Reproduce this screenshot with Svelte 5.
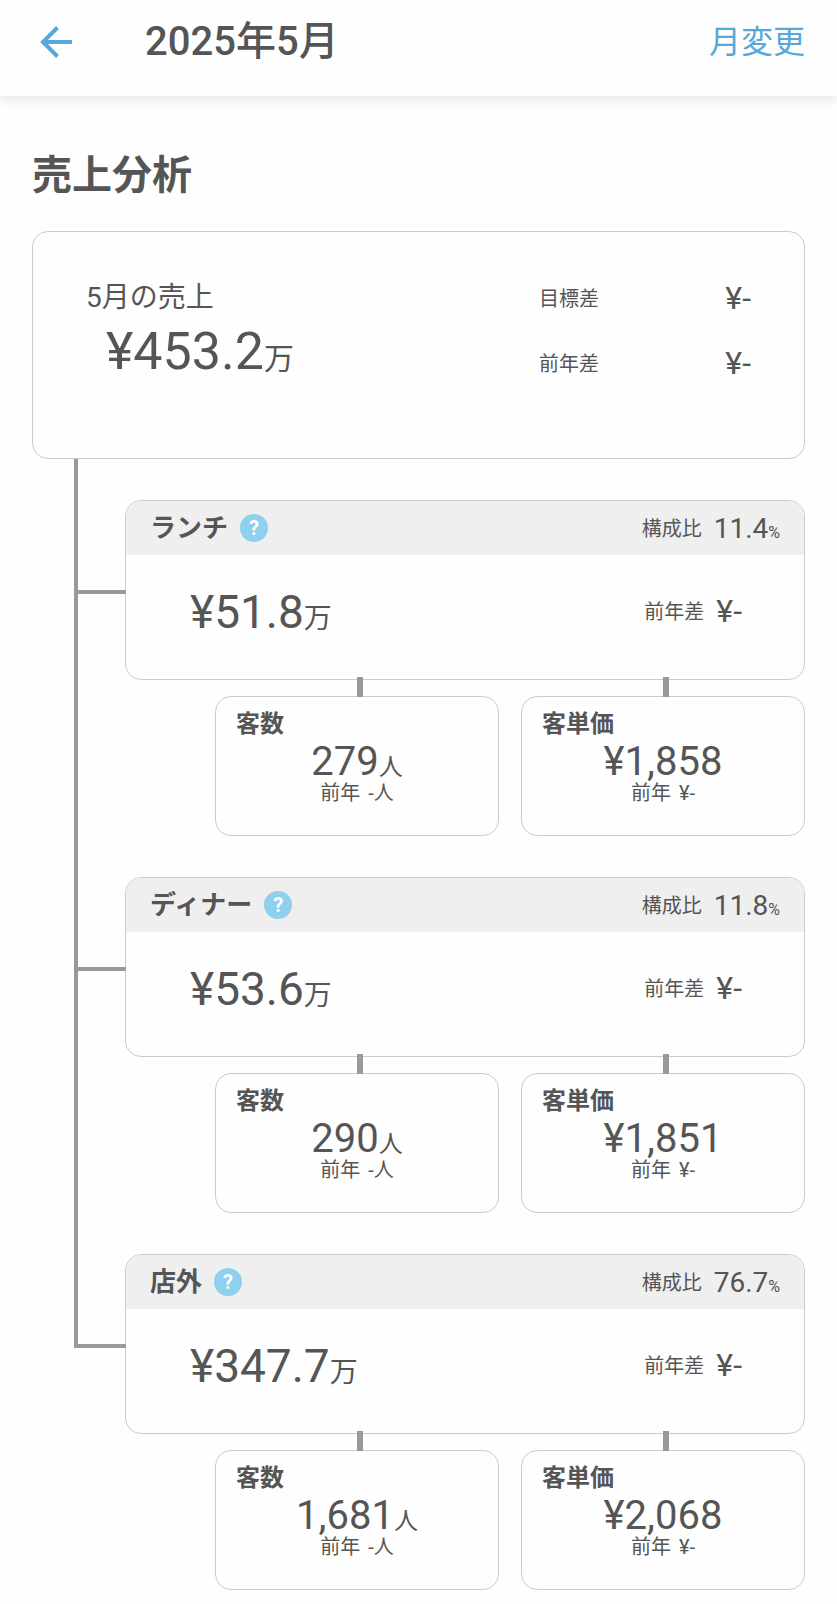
<script>
	const summary = {
		label: '5月の売上',
		amount: '¥453.2',
		diffs: [
			{ label: '目標差', value: '¥-' },
			{ label: '前年差', value: '¥-' }
		]
	};

	const segments = [
		{ name: 'ランチ', ratio: '11.4', amount: '¥51.8', diff: '¥-', guests: '279', spend: '¥1,858' },
		{ name: 'ディナー', ratio: '11.8', amount: '¥53.6', diff: '¥-', guests: '290', spend: '¥1,851' },
		{ name: '店外', ratio: '76.7', amount: '¥347.7', diff: '¥-', guests: '1,681', spend: '¥2,068' }
	];
</script>

<header class="app-bar">
	<button class="back" aria-label="戻る">
		<svg viewBox="0 0 34 34" width="34" height="34" aria-hidden="true">
			<path d="M32 17H4M17.500 2.500L3 17L17.500 31.500" fill="none" stroke="currentColor" stroke-width="4" />
		</svg>
	</button>
	<h1>2025年5月</h1>
	<button class="change-month">月変更</button>
</header>

<main>
	<h2>売上分析</h2>

	<section class="card summary">
		<div>
			<div class="summary-label">{summary.label}</div>
			<div class="summary-amount">{summary.amount}<span class="unit">万</span></div>
		</div>
		<dl class="diffs">
			{#each summary.diffs as diff}
				<div class="diff">
					<dt>{diff.label}</dt>
					<dd>{diff.value}</dd>
				</div>
			{/each}
		</dl>
	</section>

	<ul class="tree">
		{#each segments as segment}
			<li>
				<section class="card segment">
					<div class="segment-head">
						<h3>{segment.name}</h3>
						<button class="help" aria-label="{segment.name}の説明">?</button>
						<span class="small-label">構成比</span>
						<span class="ratio">{segment.ratio}<span class="percent">%</span></span>
					</div>
					<div class="segment-body">
						<div class="segment-amount">{segment.amount}<span class="unit">万</span></div>
						<span class="small-label">前年差</span>
						<span class="segment-diff">{segment.diff}</span>
					</div>
				</section>

				<div class="details">
					<section class="card detail">
						<h4>客数</h4>
						<div class="detail-value">{segment.guests}<span class="unit">人</span></div>
						<div class="detail-prev"><span>前年</span><span>-人</span></div>
					</section>
					<section class="card detail">
						<h4>客単価</h4>
						<div class="detail-value">{segment.spend}</div>
						<div class="detail-prev"><span>前年</span><span>¥-</span></div>
					</section>
				</div>
			</li>
		{/each}
	</ul>
</main>

<style>
	:global(body) {
		background: #fefefe;
		color: #555;
		font-family: Roboto, 'Noto Sans CJK JP', sans-serif;
	}

	h1, h2, h3, h4, ul, dl, dd {
		margin: 0;
		padding: 0;
	}

	button {
		padding: 0;
		border: 0;
		background: none;
		font-family: inherit;
		cursor: pointer;
	}

	.app-bar {
		display: flex;
		align-items: center;
		box-sizing: border-box;
		height: 96px;
		padding: 0 32px 12px 40px;
		background: #fefefe;
		box-shadow: 0 2px 12px rgba(0, 0, 0, 0.12);
	}

	.back {
		display: flex;
		color: #55a8d8;
	}

	h1 {
		flex: 1;
		margin-left: 71px;
		font-size: 40px;
		font-weight: 500;
		line-height: 48px;
	}

	.change-month {
		color: #55a8d8;
		font-size: 32px;
		line-height: 48px;
	}

	main {
		padding: 50px 32px 14px;
	}

	h2 {
		margin-bottom: 25px;
		font-size: 40px;
		font-weight: 700;
		line-height: 60px;
	}

	.card {
		box-sizing: border-box;
		border: 1px solid #ccc;
		border-radius: 16px;
	}

	.summary {
		display: flex;
		justify-content: space-between;
		height: 228px;
		padding: 46px 53px;
	}

	.summary-label {
		font-size: 28px;
		line-height: 40px;
	}

	.summary-amount {
		margin-left: 20px;
		font-size: 52px;
		line-height: 68px;
	}

	.summary-amount .unit {
		font-size: 30px;
	}

	.diffs {
		width: 212px;
	}

	.diff {
		display: flex;
		align-items: center;
		justify-content: space-between;
		height: 40px;
		margin-bottom: 25px;
	}

	.diff dt,
	.small-label {
		padding-bottom: 2px;
		font-size: 20px;
	}

	.diff dd,
	.segment-diff {
		font-size: 32px;
	}

	.tree {
		margin-left: 93px;
		list-style: none;
	}

	li {
		position: relative;
		padding-top: 41px;
	}

	/* trunk of the tree, stops at the last branch */
	li::before {
		content: '';
		position: absolute;
		top: 0;
		bottom: 0;
		left: -51px;
		width: 4px;
		background: #999;
	}

	li:last-child::before {
		bottom: auto;
		height: 135px;
	}

	.segment {
		position: relative;
		height: 180px;
	}

	.segment::before {
		content: '';
		position: absolute;
		top: 50%;
		left: -48px;
		width: 48px;
		height: 4px;
		background: #999;
	}

	.segment-head {
		display: flex;
		align-items: center;
		height: 54px;
		padding: 0 24px;
		border-radius: 15px 15px 0 0;
		background: #efefef;
	}

	h3 {
		font-size: 26px;
		font-weight: 700;
		line-height: 40px;
	}

	.help {
		width: 28px;
		height: 28px;
		margin: 0 auto 0 12px;
		border-radius: 50%;
		background: #8fd0ee;
		color: #fff;
		font-size: 20px;
		font-weight: 700;
		line-height: 28px;
	}

	.ratio {
		margin-left: 12px;
		font-size: 28px;
	}

	.percent {
		font-size: 16px;
	}

	.segment-body {
		display: flex;
		align-items: center;
		height: 112px;
		padding: 0 62px 0 64px;
	}

	.segment-amount {
		flex: 1;
		padding-top: 8px;
		font-size: 46px;
		line-height: 60px;
	}

	.segment-amount .unit {
		font-size: 28px;
	}

	.segment-diff {
		margin-left: 12px;
	}

	.details {
		display: grid;
		grid-template-columns: 1fr 1fr;
		gap: 22px;
		margin: 16px 0 0 90px;
	}

	.detail {
		position: relative;
		height: 140px;
		padding: 9px 20px;
	}

	.detail::before {
		content: '';
		position: absolute;
		top: -20px;
		left: 50%;
		width: 6px;
		height: 20px;
		background: #999;
	}

	h4 {
		font-size: 24px;
		font-weight: 700;
		line-height: 36px;
	}

	.detail-value {
		display: flex;
		align-items: baseline;
		justify-content: center;
		height: 41px;
		font-size: 40px;
		line-height: 40px;
	}

	.detail-value .unit {
		font-size: 24px;
	}

	.detail-prev {
		display: flex;
		justify-content: center;
		gap: 8px;
		font-size: 20px;
		line-height: 20px;
	}
</style>
